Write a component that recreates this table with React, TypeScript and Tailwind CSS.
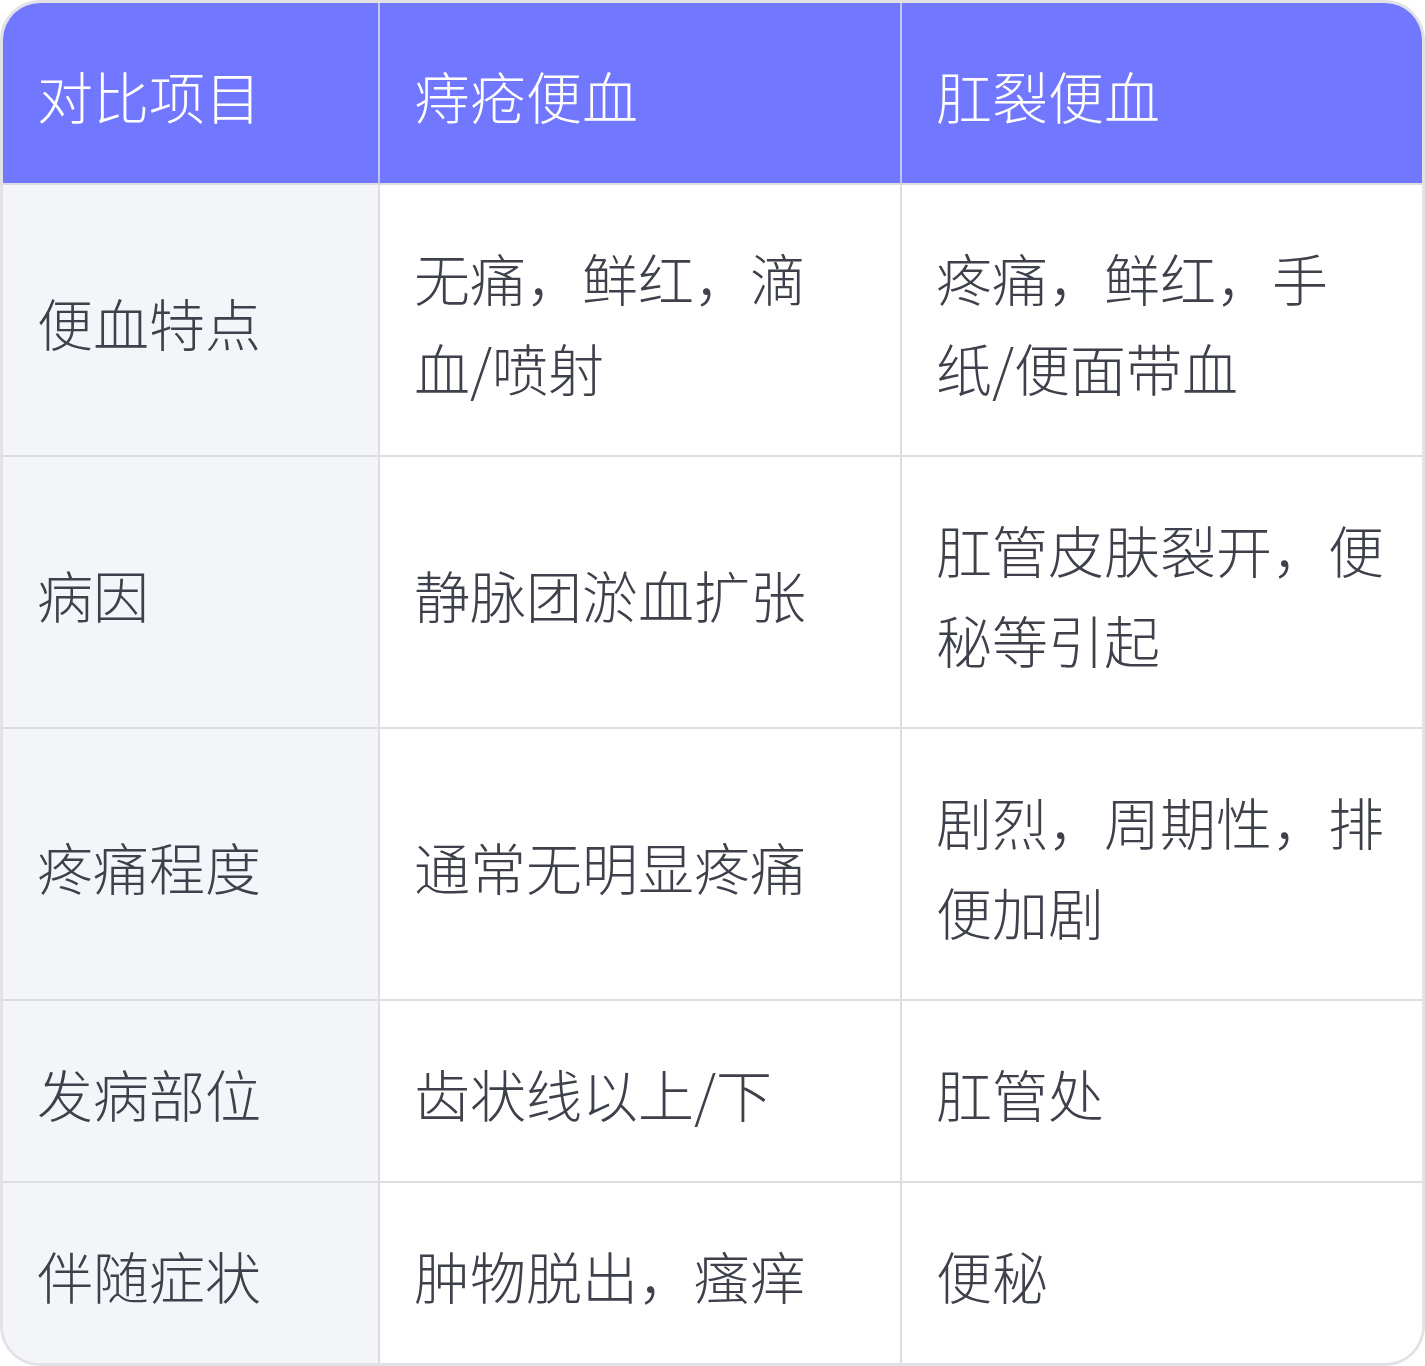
const HEAD = ['对比项目', '痔疮便血', '肛裂便血'];

const ROWS: Array<[string, string, string]> = [
  ['便血特点', '无痛，鲜红，滴血/喷射', '疼痛，鲜红，手纸/便面带血'],
  ['病因', '静脉团淤血扩张', '肛管皮肤裂开，便秘等引起'],
  ['疼痛程度', '通常无明显疼痛', '剧烈，周期性，排便加剧'],
  ['发病部位', '齿状线以上/下', '肛管处'],
  ['伴随症状', '肿物脱出，瘙痒', '便秘'],
];

export default function App() {
  return (
    <div
      className="w-[1425px] bg-white"
      style={{ fontFamily: '"Noto Sans CJK SC", "Noto Sans", sans-serif' }}
    >
      <div className="overflow-hidden rounded-[40px] border-[3px] border-[#e2e2e6]">
        <div className="grid grid-cols-[377px_522px_1fr] text-[56px] leading-[90px] font-light">
          {HEAD.map((h, i) => (
            <div
              key={h}
              className={`bg-[#7177ff] pl-[34px] pr-[35px] pt-[47px] pb-[43px] text-white border-b-2 border-[#dcdde2] ${
                i < 2 ? 'border-r-2 border-r-[#c3c6f4]' : ''
              }`}
            >
              {h}
            </div>
          ))}
          {ROWS.map((r, ri) =>
            r.map((c, ci) => (
              <div
                key={`${ri}-${ci}`}
                className={`flex items-center pl-[34px] pr-[35px] pt-[47px] pb-[43px] text-[#3e404b] border-[#dcdde2] ${
                  ci === 0 ? 'bg-[#f4f5f9]' : 'bg-white'
                } ${ci < 2 ? 'border-r-2' : ''} ${ri < ROWS.length - 1 ? 'border-b-2' : ''}`}
              >
                <span>{c}</span>
              </div>
            ))
          )}
        </div>
      </div>
    </div>
  );
}
